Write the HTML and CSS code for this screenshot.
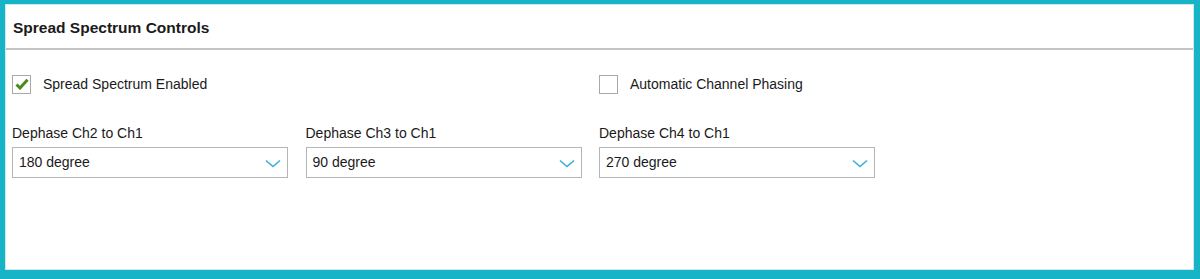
FILE: index.html
```html
<!DOCTYPE html>
<html lang="en">
<head>
    <meta charset="UTF-8">
    <title>Spread Spectrum Controls</title>
    <link rel="stylesheet" href="styles.css">
</head>
<body>
    <div class="frame">
        <div class="panel">
            <div class="panel-header">Spread Spectrum Controls</div>
            <div class="panel-body">
                <div class="row checks">
                    <label class="check">
                        <span class="box checked">
                            <svg width="14" height="12" viewBox="0 0 14 12"><path d="M1.5 6.5 L5 10 L12.5 1.8" fill="none" stroke="#4b8b1d" stroke-width="3"/></svg>
                        </span>
                        Spread Spectrum Enabled
                    </label>
                    <label class="check col3">
                        <span class="box"></span>
                        Automatic Channel Phasing
                    </label>
                </div>
                <div class="row fields">
                    <div class="field">
                        <div class="field-label">Dephase Ch2 to Ch1</div>
                        <div class="select">180 degree
                            <svg class="chev" width="16" height="9" viewBox="0 0 16 9"><path d="M1 1.5 L8 7.5 L15 1.5" fill="none" stroke="#3aaedb" stroke-width="1.6"/></svg>
                        </div>
                    </div>
                    <div class="field">
                        <div class="field-label">Dephase Ch3 to Ch1</div>
                        <div class="select">90 degree
                            <svg class="chev" width="16" height="9" viewBox="0 0 16 9"><path d="M1 1.5 L8 7.5 L15 1.5" fill="none" stroke="#3aaedb" stroke-width="1.6"/></svg>
                        </div>
                    </div>
                    <div class="field">
                        <div class="field-label">Dephase Ch4 to Ch1</div>
                        <div class="select">270 degree
                            <svg class="chev" width="16" height="9" viewBox="0 0 16 9"><path d="M1 1.5 L8 7.5 L15 1.5" fill="none" stroke="#3aaedb" stroke-width="1.6"/></svg>
                        </div>
                    </div>
                </div>
            </div>
        </div>
    </div>
</body>
</html>
```
FILE: styles.css
```css
html, body {
    margin: 0;
    padding: 0;
}

body {
    font-family: "Liberation Sans", Arial, sans-serif;
    font-size: 14px;
    color: #1a1a1a;
}

.frame {
    width: 1200px;
    height: 279px;
    box-sizing: border-box;
    background-color: #17b4c7;
    padding: 4px 6px 9px 5px;
}

.panel {
    height: 100%;
    background-color: #ffffff;
    border: 1px solid #cfe9ee;
    box-sizing: border-box;
}

.panel-header {
    height: 43px;
    line-height: 45px;
    padding-left: 7px;
    font-weight: bold;
    font-size: 15.5px;
    border-bottom: 2px solid #c4c4c4;
}

.panel-body {
    padding: 24px 6px 0 6px;
}

.row {
    display: grid;
    grid-template-columns: 276px 276px 276px;
    column-gap: 17.5px;
}

.check {
    display: flex;
    align-items: center;
    height: 20px;
    gap: 12px;
}

.col3 {
    grid-column: 3;
}

.box {
    width: 17px;
    height: 17px;
    border: 1px solid #a9a9a9;
    background: #ffffff;
    display: flex;
    align-items: center;
    justify-content: center;
}

.fields {
    margin-top: 31px;
}

.field-label {
    height: 16px;
    line-height: 16px;
    margin-bottom: 6px;
}

.select {
    position: relative;
    height: 29px;
    line-height: 29px;
    border: 1px solid #b5b5b5;
    padding-left: 6px;
}

.chev {
    position: absolute;
    right: 6px;
    top: 11px;
}
```
